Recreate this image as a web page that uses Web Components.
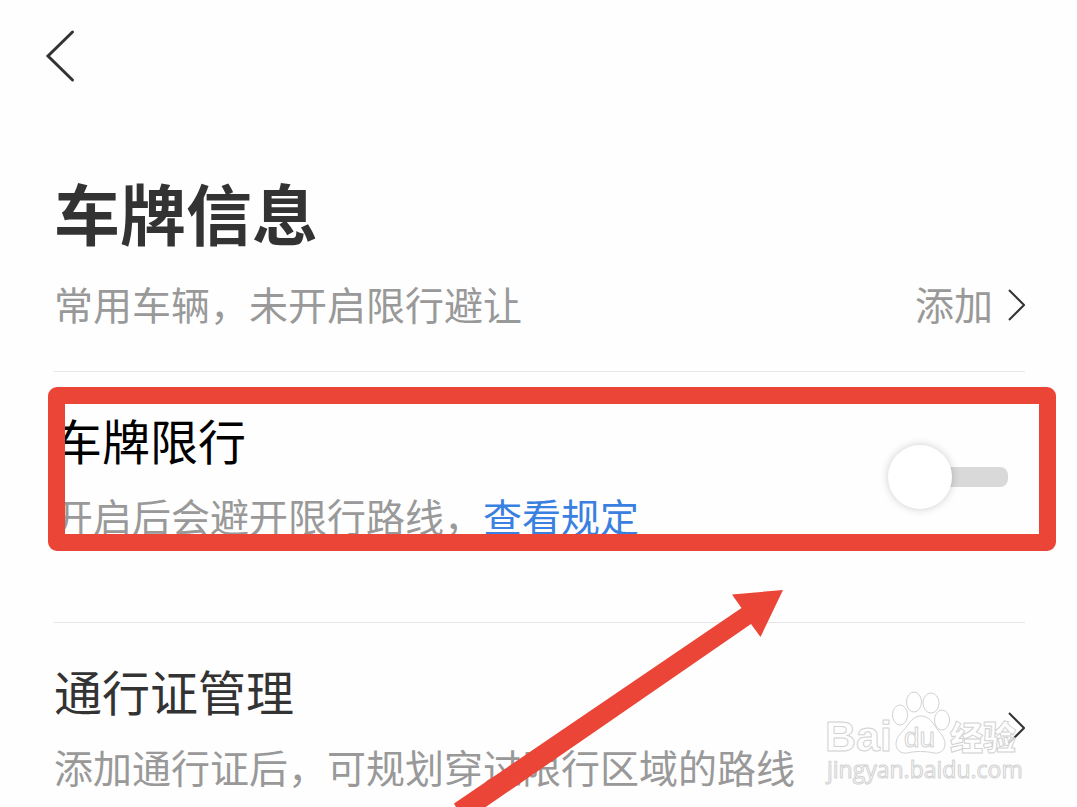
<!DOCTYPE html>
<html lang="zh-CN">
<head>
<meta charset="utf-8">
<meta name="viewport" content="width=device-width, initial-scale=1">
<title>车牌信息</title>
<style>
  body {
    margin: 0;
    background: #fefefe;
    color: #333;
    font-family: "Noto Sans CJK SC", "Noto Sans", sans-serif;
  }
</style>
</head>
<body>
<plate-page>
  <back-bar slot="bar"></back-bar>
  <page-title slot="title">车牌信息</page-title>
  <setting-row class="summary">
    <span slot="note">常用车辆，未开启限行避让</span>
    <more-link slot="action" label="添加">添加</more-link>
  </setting-row>
  <setting-row class="limit" strong>
    <span slot="heading">车牌限行</span>
    <span slot="note">开启后会避开限行路线，<rule-link>查看规定</rule-link></span>
    <toggle-switch slot="action" label="车牌限行"></toggle-switch>
    <mark-frame slot="overlay"></mark-frame>
  </setting-row>
  <setting-row class="permit">
    <span slot="heading">通行证管理</span>
    <span slot="note">添加通行证后，可规划穿过限行区域的路线</span>
    <more-link slot="action" label="通行证管理"></more-link>
  </setting-row>
  <mark-arrow slot="overlay"></mark-arrow>
  <site-watermark slot="overlay"></site-watermark>
</plate-page>

<script>
const define = (name, html, setup) => {
  const template = document.createElement('template');
  template.innerHTML = html;
  customElements.define(name, class extends HTMLElement {
    constructor() {
      super();
      this.attachShadow({ mode: 'open' }).append(template.content.cloneNode(true));
    }
    connectedCallback() {
      if (setup) setup(this, this.shadowRoot);
    }
  });
};

define('plate-page', `
  <style>
    :host { display: block; position: relative; min-height: 100vh; overflow: hidden; }
    main { padding: 0 52px 0 54px; }
  </style>
  <slot name="bar"></slot>
  <main>
    <slot name="title"></slot>
    <slot></slot>
  </main>
  <slot name="overlay"></slot>
`);

define('back-bar', `
  <style>
    :host { display: flex; align-items: center; height: 112px; padding: 0 44px; }
    button { display: flex; padding: 0; border: 0; background: none; color: #333; }
  </style>
  <button type="button" aria-label="返回">
    <svg width="32" height="56" viewBox="0 0 32 56" fill="none" stroke="currentColor" stroke-width="3" stroke-linecap="round">
      <path d="M28.5 4 4 28 28.5 52"/>
    </svg>
  </button>
`);

define('page-title', `
  <style>
    :host { display: block; padding: 59px 0 26px; }
    h1 { margin: 0; font-size: 66px; line-height: 80px; font-weight: 700; }
  </style>
  <h1><slot></slot></h1>
`);

define('setting-row', `
  <style>
    :host {
      display: flex; align-items: center; justify-content: space-between;
      position: relative; padding: 37px 0 77px; border-bottom: 1px solid #e6e6e6;
    }
    :host(.summary) { padding: 0 0 38px; }
    :host(.permit) { padding-bottom: 0; border-bottom: 0; }
    :host([strong]) .heading { color: #000; }
    .text { display: flex; flex-direction: column; gap: 16px; }
    .heading { font-size: 48px; line-height: 60px; padding-bottom: 4px; }
    .note { font-size: 39px; line-height: 52px; padding-bottom: 4px; color: #999; }
    :host(.summary) .heading { display: none; }
  </style>
  <div class="text">
    <div class="heading"><slot name="heading"></slot></div>
    <div class="note"><slot name="note"></slot></div>
  </div>
  <slot name="action"></slot>
  <slot name="overlay"></slot>
`);

define('more-link', `
  <style>
    :host { display: block; }
    a {
      display: flex; align-items: center; gap: 14px;
      font-size: 39px; line-height: 52px; color: #999; text-decoration: none;
    }
    span { padding-bottom: 4px; }
    svg { color: #333; }
  </style>
  <a href="#"><span><slot></slot></span>
    <svg width="18" height="34" viewBox="0 0 18 34" fill="none" stroke="currentColor" stroke-width="2">
      <path d="M2 2 17 17 2 32"/>
    </svg>
  </a>
`, (host, root) => root.querySelector('a').setAttribute('aria-label', host.getAttribute('label')));

define('rule-link', `
  <style>
    :host { display: inline-block; }
    a { color: #3a80e0; text-decoration: none; }
  </style>
  <a href="#"><slot></slot></a>
`);

define('toggle-switch', `
  <style>
    :host { display: block; padding-right: 17px; }
    input {
      appearance: none; display: flex; align-items: center; position: relative;
      width: 120px; height: 64px; margin: 0;
    }
    input::before {
      content: ""; width: 64px; height: 64px; border-radius: 50%;
      background: #fff; box-shadow: 0 0 8px rgba(0, 0, 0, .2); z-index: 1;
    }
    input::after {
      content: ""; flex: 1; height: 20px; margin-left: -20px;
      background: #d9d9d9; border-radius: 0 8px 8px 0;
    }
    input:checked::before { order: 1; }
  </style>
  <input type="checkbox" role="switch">
`, (host, root) => root.querySelector('input').setAttribute('aria-label', host.getAttribute('label')));

define('mark-frame', `
  <style>
    :host {
      position: absolute; inset: 15px -31px 71px -6px;
      border: 17px solid #ea4537; border-radius: 9px;
      pointer-events: none; z-index: 2;
    }
  </style>
`);

define('mark-arrow', `
  <style>
    :host { position: absolute; left: 454px; top: 590px; pointer-events: none; }
    svg { display: block; }
  </style>
  <svg width="330" height="232" viewBox="0 0 330 232" aria-hidden="true">
    <path fill="#ea4537" d="M329 0 278 4.500 287.500 18 0 213.500 10 232 297 34 306.500 47Z"/>
  </svg>
`);

define('site-watermark', `
  <style>
    :host { position: absolute; right: 53px; top: 688px; pointer-events: none; }
    svg { display: block; overflow: visible; }
    text, path, ellipse { fill: rgba(255, 255, 255, .8); stroke: #d2d2d2; stroke-width: 1; stroke-linejoin: round; }
    .latin { font: 700 43px "Liberation Sans", sans-serif; }
    .paw { font: 400 28px "Liberation Sans", sans-serif; }
    .cjk { font: 900 33px "Noto Sans CJK SC", sans-serif; }
    .site { font: 400 23px "Open Sans", sans-serif; }
  </style>
  <svg width="200" height="100" viewBox="0 0 200 100">
    <text class="latin" x="1" y="63">Bai</text>
    <ellipse cx="76" cy="27" rx="7.500" ry="10"/>
    <ellipse cx="90" cy="14" rx="7.500" ry="10"/>
    <ellipse cx="107" cy="15" rx="8" ry="10"/>
    <ellipse cx="118" cy="32" rx="7.500" ry="10"/>
    <path d="M97 28C91 28 87 32 83 38C79 44 72 48 72 56C72 62 77 66 83 65C91 63 102 63 110 65C116 66 121 62 121 56C121 49 115 44 111 38C107 32 103 28 97 28Z"/>
    <text class="paw" x="80" y="59">du</text>
    <text class="cjk" x="126" y="62">经验</text>
    <text class="site" x="3" y="90">jingyan.baidu.com</text>
  </svg>
`);
</script>
</body>
</html>
